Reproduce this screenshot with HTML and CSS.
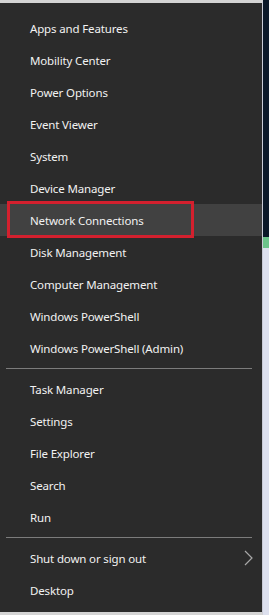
FILE: index.html
```html
<!DOCTYPE html>
<html lang="en">
<head>
    <meta charset="UTF-8">
    <meta name="viewport" content="width=device-width, initial-scale=1.0">
    <title>Quick Link Menu</title>
    <link rel="stylesheet" href="styles.css">
</head>
<body>

    <div class="screen">
        <div class="menu">
            <div class="group">
                <div class="item">Apps and Features</div>
                <div class="item">Mobility Center</div>
                <div class="item">Power Options</div>
                <div class="item">Event Viewer</div>
                <div class="item">System</div>
                <div class="item">Device Manager</div>
                <div class="item item-active">Network Connections</div>
                <div class="item">Disk Management</div>
                <div class="item">Computer Management</div>
                <div class="item">Windows PowerShell</div>
                <div class="item">Windows PowerShell (Admin)</div>
            </div>

            <div class="separator"></div>

            <div class="group">
                <div class="item">Task Manager</div>
                <div class="item">Settings</div>
                <div class="item">File Explorer</div>
                <div class="item">Search</div>
                <div class="item">Run</div>
            </div>

            <div class="separator"></div>

            <div class="group">
                <div class="item">
                    Shut down or sign out
                    <svg class="chevron" width="9" height="16" viewBox="0 0 9 16">
                        <path d="M1 1 L8 8 L1 15" fill="none" stroke="#a8a8a8" stroke-width="1.2"/>
                    </svg>
                </div>
                <div class="item">Desktop</div>
            </div>
        </div>
        <div class="desktop"></div>
    </div>

</body>
</html>
```

FILE: styles.css
```css
body {
    margin: 0;
    font-family: "Noto Sans", Arial, sans-serif;
    background-color: #2b2b2b;
}

.screen {
    display: flex;
    height: 615px;
    overflow: hidden;
}

.menu {
    width: 263px;
    height: 615px;
    box-sizing: border-box;
    padding: 9px 0 6px;
    background-color: #2b2b2b;
    border-top: 3px solid #d4d4d4;
    border-bottom: 3px solid #d4d4d4;
    border-right: 1px solid #c9cbd6;
}

.item {
    position: relative;
    display: flex;
    align-items: center;
    justify-content: space-between;
    width: 262px;
    height: 32px;
    box-sizing: border-box;
    padding: 0 9px 0 30px;
    font-size: 11.5px;
    letter-spacing: -0.15px;
    color: #f2f2f2;
}

.item-active {
    background-color: #414141;
}

.item-active::after {
    content: "";
    position: absolute;
    left: 7px;
    top: -3px;
    width: 181px;
    height: 31px;
    border: 3.5px solid #d3202e;
}

.chevron {
    display: block;
}

.separator {
    height: 1px;
    margin: 4px 10px 4px 6px;
    background-color: #7c7c7c;
}

.desktop {
    flex: 1;
    background: linear-gradient(to bottom,
        #0b1828 0, #0b1828 237px,
        #6cc38a 237px, #6cc38a 248px,
        #dde0ee 248px, #dde0ee 100%);
}
```
